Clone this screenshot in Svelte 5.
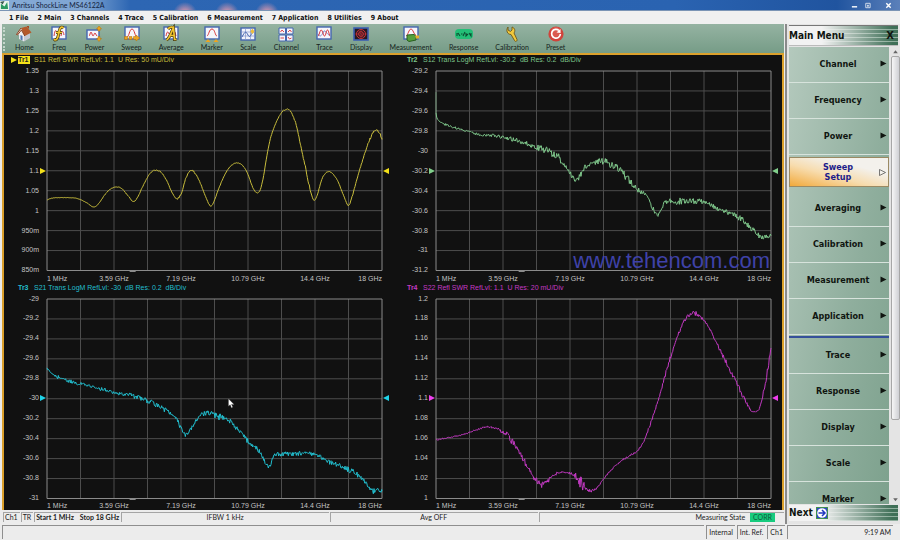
<script>
    const menus = ['File', 'Main', 'Channels', 'Trace', 'Calibration', 'Measurement', 'Application', 'Utilities', 'About'];

    const tools = [
        'Home', 'Freq', 'Power', 'Sweep', 'Average', 'Marker', 'Scale',
        'Channel', 'Trace', 'Display', 'Measurement', 'Response', 'Calibration', 'Preset',
    ];

    const sideTop = ['Channel', 'Frequency', 'Power', 'Sweep\nSetup', 'Averaging', 'Calibration', 'Measurement', 'Application'];
    const sideBottom = ['Trace', 'Response', 'Display', 'Scale', 'Marker'];

    const freqs = ['1 MHz', '3.59 GHz', '7.19 GHz', '10.79 GHz', '14.4 GHz', '18 GHz'];

    // plot space, ten divisions each way
    const W = 1005;
    const H = 597;

    let selected = 'Sweep\nSetup';

    // points are [x, y, noise]; noise is kept until the next point that sets it
    const traces = [
        {
            id: 'Tr1',
            info: 'S11 Refl SWR RefLvl: 1.1  U Res: 50 mU/Div',
            color: '#c9be3c',
            marker: '#f4e11a',
            ticks: ['1.35', '1.3', '1.25', '1.2', '1.15', '1.1', '1.05', '1', '950m', '900m', '850m'],
            points: [
                [0, 386, 0.5], [13, 381], [33, 379], [83, 380], [101, 385], [120, 395], [140, 407], [153, 399],
                [173, 371], [188, 355], [206, 347, 1], [224, 352], [243, 373], [258, 390], [270, 381], [286, 348],
                [303, 316], [316, 300, 1.5], [328, 297], [342, 303], [358, 326], [374, 360, 2], [390, 383, 4],
                [403, 366, 2], [416, 323], [425, 304, 3], [434, 299, 3], [446, 308, 1], [460, 336], [478, 381],
                [491, 405], [501, 390], [518, 345], [538, 302], [555, 281], [571, 275], [588, 284], [603, 310],
                [618, 350], [630, 365], [640, 355], [650, 313], [658, 263], [670, 203], [688, 153], [704, 124, 2],
                [718, 115], [732, 123], [748, 163], [761, 223], [775, 288, 5], [790, 358, 1], [801, 387],
                [810, 373], [825, 323], [838, 304], [846, 301], [858, 308], [873, 331], [888, 368], [905, 403, 2],
                [916, 373], [933, 313], [953, 248], [970, 200, 4], [983, 180], [990, 177], [998, 186], [1005, 205],
            ],
        },
        {
            id: 'Tr2',
            info: 'S12 Trans LogM RefLvl: -30.2  dB Res: 0.2  dB/Div',
            color: '#7fc78b',
            marker: '#82d08c',
            ticks: ['-29.2', '-29.4', '-29.6', '-29.8', '-30', '-30.2', '-30.4', '-30.6', '-30.8', '-31', '-31.2'],
            points: [
                [0, 126, 1], [2, 138], [6, 146], [20, 157, 4], [50, 168], [90, 178], [130, 190, 5], [170, 193],
                [210, 200, 7], [250, 210], [300, 227, 9], [330, 238, 13], [360, 252, 12], [380, 272, 8],
                [400, 302], [420, 326, 9], [435, 308], [450, 284], [470, 276, 8], [500, 269, 11], [530, 283, 13],
                [560, 306], [580, 328, 9], [600, 350], [630, 374], [650, 410, 8], [667, 427, 9], [680, 402],
                [700, 390, 11], [750, 390, 8], [800, 391, 5], [830, 403, 7], [850, 415], [890, 428, 9],
                [920, 446], [945, 470, 8], [975, 496, 6], [1005, 493],
            ],
        },
        {
            id: 'Tr3',
            info: 'S21 Trans LogM RefLvl: -30  dB Res: 0.2  dB/Div',
            color: '#22bfcf',
            marker: '#1fd3e8',
            ticks: ['-29', '-29.2', '-29.4', '-29.6', '-29.8', '-30', '-30.2', '-30.4', '-30.6', '-30.8', '-31'],
            points: [
                [0, 205, 4], [8, 217], [28, 232, 6], [68, 245], [108, 255, 4], [158, 268, 6], [208, 280],
                [258, 289, 8], [308, 307, 7], [348, 328, 8], [378, 345], [403, 387, 5], [416, 407], [433, 387],
                [458, 350, 7], [478, 343, 9], [508, 349, 10], [558, 375, 8], [603, 425, 8], [638, 457, 5],
                [664, 500, 6], [683, 469], [708, 464, 7], [803, 466, 6], [848, 488, 7], [898, 507, 8],
                [943, 535, 6], [975, 575, 8], [988, 569, 6], [1005, 575],
            ],
        },
        {
            id: 'Tr4',
            info: 'S22 Refl SWR RefLvl: 1.1  U Res: 20 mU/Div',
            color: '#c43ac4',
            marker: '#ee3fee',
            ticks: ['1.2', '1.18', '1.16', '1.14', '1.12', '1.1', '1.08', '1.06', '1.04', '1.02', '1'],
            points: [
                [0, 422, 2], [82, 405], [132, 388, 3], [162, 383], [187, 391, 6], [212, 407, 10], [242, 445, 10],
                [272, 497, 6], [292, 532, 9], [307, 548], [322, 556], [342, 537, 6], [367, 522, 3], [392, 519, 4],
                [415, 527, 14], [430, 543, 18], [445, 562, 6], [462, 575, 4], [482, 565, 2], [512, 527],
                [547, 491, 3], [582, 468], [606, 452], [627, 417, 5], [647, 362], [672, 287, 6], [692, 212],
                [714, 142], [737, 82, 6], [757, 50], [772, 42, 7], [789, 50, 4], [812, 75], [842, 132, 7],
                [872, 192], [902, 252], [927, 302, 4], [942, 328], [955, 338, 3], [970, 327], [982, 282, 8],
                [994, 217], [1005, 147],
            ],
        },
    ];

    function jitter(n) {
        const s = Math.sin(n * 12.9898) * 43758.5453;
        return (s - Math.floor(s)) * 2 - 1;
    }

    function slope(points, i) {
        const a = points[Math.max(i - 1, 0)];
        const b = points[Math.min(i + 1, points.length - 1)];
        return (b[1] - a[1]) / (b[0] - a[0]);
    }

    function tracePath(points) {
        let d = '';
        let noise = 0;
        for (let i = 0; i < points.length - 1; i++) {
            const [x0, y0] = points[i];
            const [x1, y1] = points[i + 1];
            if (points[i][2] !== undefined) noise = points[i][2];
            const w = x1 - x0;
            const m0 = slope(points, i) * w;
            const m1 = slope(points, i + 1) * w;
            for (let x = x0; x < x1; x += 2) {
                const t = (x - x0) / w;
                const y =
                    (2 * t ** 3 - 3 * t ** 2 + 1) * y0 +
                    (t ** 3 - 2 * t ** 2 + t) * m0 +
                    (3 * t ** 2 - 2 * t ** 3) * y1 +
                    (t ** 3 - t ** 2) * m1;
                d += `${d ? 'L' : 'M'}${x} ${(y + jitter(x + y0) * noise).toFixed(1)}`;
            }
        }
        const last = points[points.length - 1];
        return d + `L${last[0]} ${last[1]}`;
    }

    const gridLines = [1, 2, 3, 4, 5, 6, 7, 8, 9];
</script>

<div class="app">
    <header class="titlebar">
        <svg class="logo" viewBox="0 0 10 10" aria-hidden="true">
            <rect width="10" height="10" fill="#e9f3ec" />
            <path d="M1 9 L1 3 L5 6 L8 1 L9 9 Z" fill="#2b9a63" />
            <path d="M0 1 L5 0 L3 4 Z" fill="#3a5a50" />
        </svg>
        <h1>Anritsu ShockLine MS46122A</h1>
        <div class="flex-fill"></div>
        <div class="window-buttons">
            <button aria-label="Minimize"><svg viewBox="0 0 8 8"><path d="M1 5.5H7" stroke="#fff" stroke-width="1.6" /></svg></button>
            <button aria-label="Restore"><svg viewBox="0 0 8 8"><path d="M2 1.5H7V6.5H2Z M4 3.5H5V5H4Z" stroke="#dfe6f0" fill="none" /></svg></button>
            <button aria-label="Close" class="close"><svg viewBox="0 0 8 8"><path d="M1.5 1.5L6.5 6.5M6.5 1.5L1.5 6.5" stroke="#fff" stroke-width="1.6" /></svg></button>
        </div>
    </header>

    <nav class="menubar">
        {#each menus as menu, i}
            <button>{i + 1} {menu}</button>
        {/each}
    </nav>

    <div class="body">
        <main>
            <div class="toolbar">
                <span class="grip"></span>
                {#each tools as tool}
                    <button class="tool">
                        <svg viewBox="0 0 16 16" fill="none" aria-hidden="true">
                            {#if ['Freq', 'Power', 'Sweep', 'Average', 'Marker', 'Trace', 'Measurement'].includes(tool)}
                                {#if tool === 'Power'}
                                    <rect x="1" y="4" width="12" height="9" fill="#f6f6fb" stroke="#4566b0" stroke-width="1.4" />
                                    <path d="M3 10 C4 10 4 6 5 6 S6 10 7 10 S8 7 9 7 L11 10" stroke="#d8393d" />
                                {:else}
                                    <rect x="1" y="1" width="14" height="12" fill="#f6f6fb" stroke="#4566b0" stroke-width="1.4" />
                                {/if}
                            {/if}
                            {#if tool === 'Home'}
                                <path d="M3 7 L3 13 L8 15.5 L8 9 Z" fill="#e9e9ee" />
                                <path d="M8 9 L8 15.5 L14 12 L14 6 Z" fill="#c3c8d2" />
                                <path d="M0.5 8.5 L5 2 L8.5 9.5 Z" fill="#f1f1f1" />
                                <path d="M5 2 L10.5 0.5 L15.5 6.5 L8.8 10 Z" fill="#b4592b" />
                                <path d="M5 2 L0.5 8.5 L1.5 9 L5.4 4 L8.8 10" stroke="#8f3f1d" />
                                <path d="M11 1 V0 H13 V3" fill="#a04c24" />
                                <path d="M4.5 9 L6.5 10 V14.5 L4.5 13.5 Z" fill="#4b74b3" />
                            {:else if tool === 'Freq'}
                                <path d="M3 10 C4 3 5 3 7 9 M10 10 C11 4 12 4 13 9" stroke="#d8393d" />
                                <path d="M12.5 2 C10 0 8.7 2 8 6 C7.3 10 7 14 4 14 L3 13 M5 6.5 H11" stroke="#463a12" stroke-width="3" />
                                <path d="M12.5 2 C10 0 8.7 2 8 6 C7.3 10 7 14 4 14 L3 13 M5 6.5 H11" stroke="#efc22e" stroke-width="1.7" />
                            {:else if tool === 'Power'}
                                <path d="M13 0 L15.5 3 H14 V5 H12 V3 H10.5 Z M13 15.5 L10.5 12.5 H12 V10.5 H14 V12.5 H15.5 Z" fill="#eda41f" stroke="#b1720e" stroke-width="0.5" />
                            {:else if tool === 'Sweep'}
                                <path d="M3 11 C5 11 5.5 3 8 3 S11 11 13 11" stroke="#d8393d" />
                                <path d="M0.5 10.5 H3.5 V13.5 H0.5 Z M5 10.5 H8 V13.5 H5 Z M9.5 10.5 H12 V9 L15.8 12 L12 15 V13.5 H9.5 Z" fill="#eda41f" stroke="#b1720e" stroke-width="0.5" />
                            {:else if tool === 'Average'}
                                <path d="M3 10 C4 5 5 5 6 8 M12 6 L13 10" stroke="#d8393d" />
                                <path d="M3.5 14 C7 12 8 6 10.5 2 L11.5 13.5 H13.5 M6 9.5 H11 M5 3 C7 0.5 10 1 10.5 2" stroke="#3d3415" stroke-width="3" />
                                <path d="M3.5 14 C7 12 8 6 10.5 2 L11.5 13.5 H13.5 M6 9.5 H11 M5 3 C7 0.5 10 1 10.5 2" stroke="#efc22e" stroke-width="1.7" />
                            {:else if tool === 'Marker'}
                                <path d="M3 10 C5 9 5 3 8 3 S11 10 13 10" stroke="#d8393d" />
                                <path d="M4 13 L6.5 16 H1.5 Z M12 13 L14.5 16 H9.5 Z" fill="#eda41f" />
                            {:else if tool === 'Scale'}
                                <rect x="1" y="2" width="14" height="12" fill="#f1f3fa" stroke="#4566b0" stroke-width="1.4" />
                                <path d="M1 6 H15 M1 10 H15 M5.5 2 V14 M10.5 2 V14" stroke="#8296cc" stroke-width="0.7" />
                                <path d="M2 11 C5 5 6 5 8 9 S11 8 13 6" stroke="#4566b0" />
                                <path d="M12.5 2.5 L14.5 5.5 L12.5 8 L10.3 5.5 Z" fill="#eebc3a" />
                            {:else if tool === 'Channel'}
                                <path d="M1 2 H7.5 V8 H1 Z M8.5 2 H15 V8 H8.5 Z M1 9 H7.5 V15 H1 Z M8.5 9 H15 V15 H8.5 Z" fill="#f4f5fa" stroke="#4566b0" />
                                <path d="M2.5 6 L4 4 L6 6 M10 6 L12 4 L13.5 6 M2.5 12 H6 M10 11 L11.5 13 L13.5 12" stroke="#d8393d" stroke-width="0.9" />
                            {:else if tool === 'Trace'}
                                <path d="M2 8 C4 11 5 11 8 5 C10 4 12 11 14 8" stroke="#7b8fce" />
                                <path d="M2 10 C3 10 4 4 5 4 C7 4 7 10 8.5 10 C10 10 10 4 11.5 4 C13 4 13 10 14 10" stroke="#d8393d" />
                            {:else if tool === 'Display'}
                                <rect x="1" y="2" width="14" height="12" fill="#231a22" stroke="#3c5fb2" stroke-width="1.6" />
                                <circle cx="8" cy="8" r="4.5" stroke="#d8343a" />
                                <circle cx="8" cy="8" r="2.4" stroke="#d8343a" />
                                <path d="M2 8 H14 M8 3 V13 M5 4 L11 12" stroke="#a32930" stroke-width="0.7" />
                            {:else if tool === 'Measurement'}
                                <path d="M3 10 C5 9 6 3 8 3 S11 9 13 9" stroke="#d8393d" />
                                <path d="M4 9 L11 8.5 L13 10 V14 L6 15.5 L4 14 Z" fill="#55a03b" stroke="#28601f" />
                                <path d="M12 9.5 H16 V12.5 H13 Z" fill="#e5ae2d" />
                            {:else if tool === 'Response'}
                                <rect x="-1" y="3" width="18" height="10" rx="4" fill="#23bf77" />
                                <path d="M1 7 V10 M2 7 L4 10 M5 8 H6.5 M7 10 L9 6 M10 7 V10 L12 8 M13 7 L15 10 L15 7" stroke="#0c4b31" stroke-width="1.1" />
                            {:else if tool === 'Calibration'}
                                <path d="M4 1 V4 L6.5 5.5 L8 4 V1 C11 2 11.5 5 10 7 L13 13.5 C13.5 15.5 11 16 10.5 14.5 L7 8.5 C3.5 8.5 1.5 4.5 4 1 Z" fill="#f2c93c" stroke="#6c571a" stroke-width="0.9" />
                            {:else if tool === 'Preset'}
                                <circle cx="8" cy="8" r="7.6" fill="#d0433b" />
                                <circle cx="8" cy="6" r="5" fill="#e2695d" opacity="0.6" />
                                <path d="M11 4.5 A4.4 4.4 0 1 0 12.4 8" stroke="#fff" stroke-width="1.7" />
                                <path d="M8.5 6.5 L12.5 7 L12.5 3 Z" fill="#fff" />
                            {/if}
                        </svg>
                        <span>{tool}</span>
                    </button>
                {/each}
            </div>

            <div class="charts">
                {#each traces as trace, i}
                    <section class="chart" style="--trace: {trace.color}; --marker: {trace.marker}">
                        <div class="chart-title">
                            <span class="pointer">{#if i === 0}<svg viewBox="0 0 6 6"><path d="M0 0L6 3L0 6Z" /></svg>{/if}</span>
                            <b class:active={i === 0}>{trace.id}</b>
                            <span class="info">{trace.info}</span>
                        </div>

                        <div class="chart-row">
                            <div class="ticks">
                                {#each trace.ticks as tick}
                                    <span>{tick}</span>
                                {/each}
                            </div>
                            <svg class="ref-marker" viewBox="0 0 6 6"><path d="M0 0L6 3L0 6Z" /></svg>
                            <div class="plot">
                                <svg class="plot-svg" viewBox="0 0 {W} {H}" preserveAspectRatio="none">
                                    {#each gridLines as n}
                                        <path class="grid" d="M{(n * W) / 10} 0V{H}M0 {(n * H) / 10}H{W}" />
                                    {/each}
                                    <rect class="frame" width={W} height={H} />
                                    <path class="tick" d="M248 {H + 3}H266" />
                                    {#if trace.id === 'Tr2'}
                                        <path class="curve edge" d="M0 63V126" />
                                    {/if}
                                    <path class="curve" d={tracePath(trace.points)} />
                                </svg>
                                {#if trace.id === 'Tr2'}
                                    <span class="watermark">www.tehencom.com</span>
                                {/if}
                                {#if trace.id === 'Tr3'}
                                    <svg class="cursor" viewBox="0 0 8 12"><path d="M0.5 0.5V9L2.5 7.5L4 11L5.5 10L4 7H7Z" /></svg>
                                {/if}
                            </div>
                            <svg class="ref-marker" viewBox="0 0 6 6"><path d="M6 0L0 3L6 6Z" /></svg>
                        </div>

                        <div class="freqs">
                            {#each freqs as freq}
                                <span>{freq}</span>
                            {/each}
                        </div>
                    </section>
                {/each}
            </div>

            <div class="status">
                <span class="cell">Ch1</span>
                <span class="cell">TR</span>
                <span class="cell range"><b>Start 1 MHz</b><b>Stop 18 GHz</b></span>
                <span class="cell wide">IFBW 1 kHz</span>
                <span class="cell wide">Avg OFF</span>
                <span class="cell wide state">Measuring State <em>CORR</em></span>
            </div>
        </main>

        <aside>
            <div class="side-head">
                <h2>Main Menu</h2>
                <div class="flex-fill"></div>
                <button aria-label="Close menu">X</button>
            </div>

            <div class="side-body">
                <div class="side-list">
                    {#each [sideTop, sideBottom] as group}
                        <div class="group">
                            {#each group as item}
                                <button
                                    class="side-item"
                                    class:selected={item === selected}
                                    on:click={() => (selected = item)}
                                >
                                    <span>{item}</span>
                                    <svg viewBox="0 0 7 7"><path d="M0.5 0.5L6.5 3.5L0.5 6.5Z" /></svg>
                                </button>
                            {/each}
                        </div>
                    {/each}
                </div>
                <div class="scroll">
                    <button aria-label="Scroll up"><svg viewBox="0 0 6 6"><path d="M1 4.5H5L3 2Z" /></svg></button>
                    <div class="track"><div class="thumb"></div></div>
                    <button aria-label="Scroll down"><svg viewBox="0 0 6 6"><path d="M1 2H5L3 4.5Z" /></svg></button>
                </div>
            </div>

            <button class="next">
                Next
                <svg viewBox="0 0 12 12" aria-hidden="true">
                    <rect x="0.5" y="0.5" width="11" height="11" fill="#2f49c4" stroke="#3e8f4f" />
                    <circle cx="6" cy="6" r="4.8" fill="#fff" />
                    <path d="M2.5 6H8.5M6 3L9 6L6 9" fill="none" stroke="#2038c0" stroke-width="1.5" />
                </svg>
            </button>
        </aside>
    </div>

    <footer>
        <span class="box message"></span>
        <span class="box">Internal</span>
        <span class="box">Int. Ref.</span>
        <span class="box">Ch1</span>
        <span class="box clock">9:19 AM</span>
    </footer>
</div>

<style>
    :global(body) {
        margin: 0;
    }

    .app {
        height: 100vh;
        display: flex;
        flex-direction: column;
        overflow: hidden;
        background: #ececec;
        color: #222;
        font-family: Lato, 'Liberation Sans', sans-serif;
        font-size: 7px;
        line-height: 8px;
    }

    button {
        margin: 0;
        padding: 0;
        border: 0;
        background: none;
        color: inherit;
        font: inherit;
    }

    svg {
        display: block;
        flex: none;
    }

    .flex-fill {
        flex: 1 1 auto;
    }

    /* title bar */
    .titlebar {
        height: 10px;
        flex: none;
        display: flex;
        align-items: center;
        gap: 3px;
        background:
            radial-gradient(circle at 185px 14px, #b98fae 4px, transparent 12px),
            radial-gradient(circle at 227px 14px, #b98fae 4px, transparent 12px),
            radial-gradient(circle at 267px 14px, #b98fae 4px, transparent 12px),
            radial-gradient(ellipse at 104px 8px, #6b4a6d 3px, transparent 16px),
            linear-gradient(90deg, #86abd6, #7ea5d3 85px, #2d66b3 130px, #2a63b1 75%, #20549f 93%, #5b80ba);
    }

    .logo {
        width: 9px;
        height: 9px;
    }

    h1 {
        margin: 0;
        font-size: 7px;
        font-weight: 400;
        color: #14233c;
    }

    .window-buttons {
        display: flex;
        gap: 6px;
        padding-right: 8px;
    }

    .window-buttons svg {
        width: 7px;
        height: 7px;
    }

    .close {
        margin-left: 8px;
    }

    /* menu bar */
    .menubar {
        height: 14px;
        flex: none;
        display: flex;
        align-items: center;
        gap: 9px;
        padding-left: 9px;
        border-top: 1px solid #7b94b5;
        box-sizing: border-box;
        background: #f0f0f0;
        color: #111;
        font-family: 'DejaVu Sans Condensed', 'DejaVu Sans', sans-serif;
        font-weight: 700;
        font-size: 7px;
    }

    .body {
        flex: 1;
        min-height: 0;
        display: flex;
    }

    main {
        flex: 1;
        min-width: 0;
        display: flex;
        flex-direction: column;
        padding-left: 2px;
    }

    /* toolbar */
    .toolbar {
        display: flex;
        align-items: center;
        gap: 17px;
        height: 29px;
        flex: none;
        background: linear-gradient(#95b3a2, #769c87);
    }

    .grip {
        width: 2px;
        height: 24px;
        margin: 0 -7px 0 1px;
        border-left: 2px dotted #c4d6cb;
        box-sizing: border-box;
    }

    .tool {
        min-width: 17px;
        display: flex;
        flex-direction: column;
        align-items: center;
        gap: 1px;
        color: #16241d;
    }

    .tool svg {
        width: 16px;
        height: 16px;
        overflow: visible;
    }

    /* charts */
    .charts {
        flex: 1;
        min-height: 0;
        display: grid;
        grid-template-columns: 1fr 1fr;
        grid-template-rows: 1fr 1fr;
        border: 2px solid #dba02c;
        border-bottom: 0;
        background: #111;
    }

    .chart {
        min-height: 0;
        min-width: 0;
        display: flex;
        flex-direction: column;
        font-family: 'Liberation Sans', Arial, sans-serif;
        color: #c4c4c4;
    }

    .chart-title {
        height: 10px;
        flex: none;
        display: flex;
        align-items: center;
        margin-bottom: 6px;
        color: var(--trace);
        white-space: pre;
    }

    .pointer {
        width: 7px;
        padding-left: 7px;
    }

    .pointer svg {
        width: 6px;
        height: 6px;
        fill: var(--marker);
    }

    .chart-title b {
        width: 12px;
    }

    .chart-title .active {
        background: var(--marker);
        color: #222;
    }

    .info {
        padding-left: 4px;
    }

    .chart-row {
        flex: 1;
        min-height: 0;
        display: flex;
        align-items: center;
        padding-right: 3px;
    }

    .ticks {
        width: 35px;
        height: 100%;
        display: flex;
        flex-direction: column;
        justify-content: space-between;
        text-align: right;
    }

    .ticks span {
        height: 0;
        line-height: 0;
    }

    .ref-marker {
        width: 6px;
        height: 6px;
        margin: 0 1px;
        fill: var(--marker);
    }

    .plot {
        position: relative;
        flex: 1;
        min-width: 0;
        height: 100%;
    }

    .plot-svg {
        width: 100%;
        height: 100%;
        overflow: visible;
    }

    .plot-svg * {
        fill: none;
        vector-effect: non-scaling-stroke;
    }

    .grid {
        stroke: #4d4d4d;
    }

    .frame {
        stroke: #8b8b8b;
    }

    .tick {
        stroke: #8b8b8b;
    }

    .curve {
        stroke: var(--trace);
    }

    .edge {
        opacity: 0.5;
    }

    .watermark {
        position: absolute;
        right: 1px;
        bottom: 0;
        color: #3f42a8;
        font-size: 22px;
        line-height: 20px;
    }

    .cursor {
        position: absolute;
        left: 54%;
        top: 50%;
        width: 7px;
        height: 11px;
        fill: #fff;
        stroke: #333;
        stroke-width: 0.4;
    }

    .freqs {
        height: 12px;
        flex: none;
        display: grid;
        grid-template-columns: 1fr repeat(4, 2fr) 1fr;
        align-items: center;
        margin: 0 11px 0 43px;
        padding-top: 4px;
        box-sizing: border-box;
        text-align: center;
        white-space: nowrap;
    }

    .freqs span {
        min-width: 0;
    }

    .freqs span:first-child {
        text-align: left;
    }

    .freqs span:last-child {
        text-align: right;
    }

    /* status rows */
    .status {
        height: 14px;
        flex: none;
        display: flex;
        align-items: center;
        gap: 1px;
        padding-left: 1px;
    }

    .cell {
        height: 10px;
        padding: 0 2px 0 1px;
        border: solid #a5a5a5;
        border-width: 1px 0 0 1px;
        box-sizing: border-box;
        line-height: 9px;
        white-space: nowrap;
    }

    .range {
        width: 86px;
        display: flex;
        justify-content: space-between;
        padding-right: 1px;
    }

    .wide {
        flex: 1 1 0;
        text-align: center;
    }

    .state {
        flex-grow: 1.15;
        padding-right: 9px;
        text-align: right;
    }

    .state em {
        display: inline-block;
        margin-left: 3px;
        padding: 0 3px;
        background: #17cb7e;
        color: #0c5c3a;
        font-style: normal;
    }

    footer {
        flex: none;
        display: flex;
        gap: 2px;
        padding: 1px 7px 1px 2px;
    }

    .box {
        height: 14px;
        padding: 0 2px;
        border: solid #8f8f8f;
        border-width: 1px 0 0 1px;
        box-sizing: border-box;
        line-height: 12px;
        white-space: nowrap;
    }

    .message {
        flex: 1;
    }

    .clock {
        width: 106px;
        text-align: right;
    }

    /* side menu */
    aside {
        width: 115px;
        flex: none;
        display: flex;
        flex-direction: column;
        padding: 1px 0 3px 2px;
        border-left: 2px solid #8a8a8a;
        box-sizing: border-box;
        margin-left: 1px;
        background: #e4e4e4;
        color: #101510;
        font-family: 'DejaVu Sans Condensed', 'DejaVu Sans', sans-serif;
        font-weight: 700;
        font-size: 9px;
        line-height: 10px;
    }

    .side-head,
    .next {
        display: flex;
        align-items: center;
        flex: none;
        background:
            linear-gradient(90deg, #f2f2f2 30%, rgba(242, 242, 242, 0) 95%),
            repeating-linear-gradient(#3f6f57 0 3px, #8fae9d 3px 4px);
    }

    .side-head {
        height: 21px;
        margin-right: 2px;
        border-top: 1px solid #777;
        border-bottom: 1px solid #bbb;
        box-sizing: border-box;
        font-size: 10px;
    }

    h2 {
        margin: 0;
        font-size: 10px;
        font-weight: 700;
    }

    .side-head button {
        padding-right: 4px;
        font-size: 11px;
    }

    .side-body {
        flex: 1;
        min-height: 0;
        display: flex;
        gap: 2px;
        padding-top: 1px;
    }

    .side-list {
        flex: 1;
        overflow: hidden;
        background: linear-gradient(100deg, #b4c9bd, #8fae9d 60%, #7da18d);
    }

    .group + .group {
        border-top: 2px solid #35509a;
        margin-top: 1px;
    }

    .side-item {
        width: 100%;
        height: 36px;
        display: flex;
        align-items: center;
        border-bottom: 1px solid #d7e3dc;
        padding: 0 2px 2px 0;
        box-sizing: border-box;
    }

    .side-item span {
        flex: 1;
        text-align: center;
        white-space: pre-line;
    }

    .side-item svg {
        width: 7px;
        height: 7px;
        margin-left: -7px;
        fill: #101510;
    }

    .selected {
        height: 30px;
        margin: 2px 0 4px;
        padding-bottom: 0;
        border: 1px solid #9b8a63;
        background: linear-gradient(15deg, #f2a93a, #f7dcae 40%, #f3f1ec 70%);
        color: #1c1c8c;
    }

    .side-item.selected svg {
        fill: none;
        stroke: #444;
        stroke-width: 0.7;
    }

    .scroll {
        width: 9px;
        display: flex;
        flex-direction: column;
    }

    .scroll button {
        height: 9px;
    }

    .scroll svg {
        width: 7px;
        height: 7px;
        margin: 0 auto;
        fill: #666;
    }

    .track {
        flex: 1;
    }

    .thumb {
        height: 83%;
        border: 1px solid #a7a7a7;
        border-radius: 2px;
        box-sizing: border-box;
        background: linear-gradient(90deg, #f6f6f6, #cfd0d4);
    }

    .next {
        height: 16px;
        gap: 3px;
        margin: 1px 2px 0 0;
        font-size: 10px;
    }

    .next svg {
        width: 12px;
        height: 12px;
    }
</style>
